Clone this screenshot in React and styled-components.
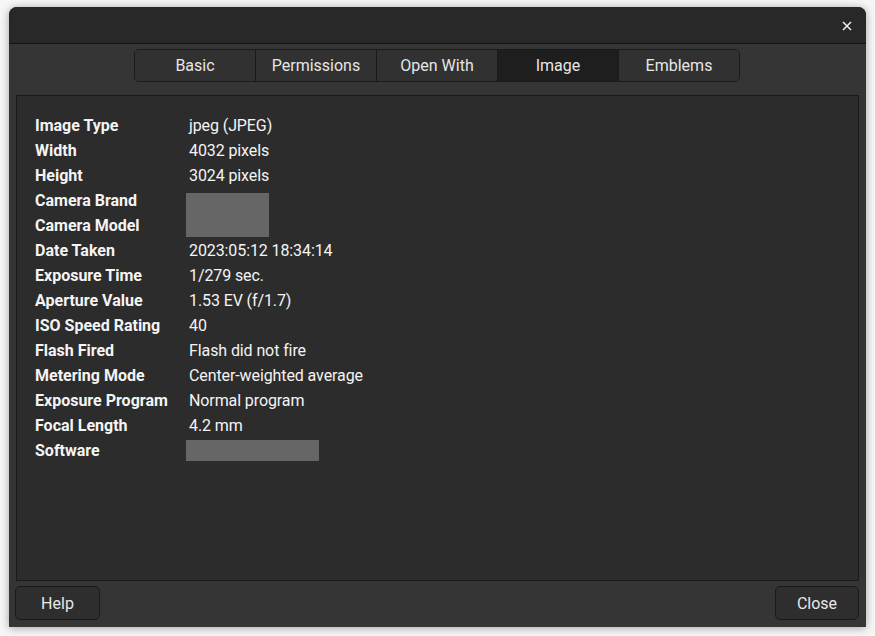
import React from "react";
import styled, { createGlobalStyle } from "styled-components";

const Global = createGlobalStyle`
  html, body { margin: 0; padding: 0; background: #f6f6f6; }
  body { font-family: Roboto, "Noto Sans", "Liberation Sans", sans-serif; }
  #root { width: 875px; height: 636px; }
`;

const Stage = styled.div`
  width: 875px;
  height: 636px;
  box-sizing: border-box;
  padding: 7px 9px 9px 9px;
`;

const Window = styled.div`
  width: 857px;
  height: 620px;
  display: flex;
  flex-direction: column;
  background: #353535;
  border-radius: 8px 8px 0 0;
  box-shadow: 0 1px 9px rgba(0, 0, 0, 0.35);
  overflow: hidden;
`;

const TitleBar = styled.div`
  height: 36px;
  flex: none;
  background: #282828;
  border-bottom: 1px solid #141414;
  display: flex;
  align-items: center;
  justify-content: flex-end;
  padding-right: 11px;
`;

const CloseX = styled.button`
  width: 16px;
  height: 16px;
  padding: 0;
  border: none;
  background: transparent;
  display: flex;
  align-items: center;
  justify-content: center;
  margin-top: 1px;
`;

const Body = styled.div`
  flex: 1;
  display: flex;
  flex-direction: column;
  padding: 5px 7px 7px 7px;
  min-height: 0;
`;

const TabRow = styled.div`
  display: flex;
  justify-content: center;
  flex: none;
  padding-right: 1px;
`;

const TabGroup = styled.div`
  display: flex;
  border: 1px solid #1a1a1a;
  border-radius: 5px;
  overflow: hidden;
`;

const Tab = styled.div`
  width: 120px;
  height: 31px;
  display: flex;
  align-items: center;
  justify-content: center;
  font-size: 16px;
  color: #e6e6e6;
  background: ${(p) => (p.$active ? "#1e1e1e" : "#313131")};
  & + & {
    border-left: 1px solid #1a1a1a;
  }
`;

const Frame = styled.div`
  margin-top: 13px;
  flex: 1;
  background: #2c2c2c;
  border: 1px solid #1a1a1a;
  padding: 17px 18px;
`;

const Grid = styled.div`
  display: grid;
  grid-template-columns: 154px 1fr;
  grid-auto-rows: 25px;
  font-size: 16px;
  line-height: 25px;
  color: #f4f4f4;
`;

const Label = styled.div`
  font-weight: 700;
  white-space: nowrap;
`;

const Value = styled.div`
  white-space: nowrap;
  letter-spacing: -0.1px;
`;

const Redacted = styled.div`
  background: #666666;
  width: ${(p) => p.$w}px;
  height: ${(p) => p.$h}px;
  margin-top: ${(p) => p.$top}px;
  margin-left: -3px;
  grid-row: span ${(p) => p.$span || 1};
`;

const Footer = styled.div`
  flex: none;
  display: flex;
  justify-content: space-between;
  margin-top: 5px;
  margin-left: -1px;
`;

const Button = styled.button`
  width: ${(p) => p.$w || 85}px;
  height: 34px;
  box-sizing: border-box;
  border: 1px solid #1a1a1a;
  border-radius: 5px;
  background: #2e2e2e;
  color: #e8e8e8;
  font-family: Roboto, "Noto Sans", sans-serif;
  font-size: 16px;
  padding: 0;
  padding-top: 1px;
`;

const rowsBefore = [
  ["Image Type", "jpeg (JPEG)"],
  ["Width", "4032 pixels"],
  ["Height", "3024 pixels"],
];

const rowsAfter = [
  ["Date Taken", "2023:05:12 18:34:14"],
  ["Exposure Time", "1/279 sec."],
  ["Aperture Value", "1.53 EV (f/1.7)"],
  ["ISO Speed Rating", "40"],
  ["Flash Fired", "Flash did not fire"],
  ["Metering Mode", "Center-weighted average"],
  ["Exposure Program", "Normal program"],
  ["Focal Length", "4.2 mm"],
];

const tabs = ["Basic", "Permissions", "Open With", "Image", "Emblems"];

export default function App() {
  return (
    <>
      <Global />
      <Stage>
        <Window>
          <TitleBar>
            <CloseX aria-label="close">
              <svg width="10" height="10" viewBox="0 0 10 10">
                <path d="M1 1 L9 9 M9 1 L1 9" stroke="#eeeeee" strokeWidth="1.5" />
              </svg>
            </CloseX>
          </TitleBar>
          <Body>
            <TabRow>
              <TabGroup>
                {tabs.map((t) => (
                  <Tab key={t} $active={t === "Image"}>
                    {t}
                  </Tab>
                ))}
              </TabGroup>
            </TabRow>
            <Frame>
              <Grid>
                {rowsBefore.map(([l, v]) => (
                  <React.Fragment key={l}>
                    <Label>{l}</Label>
                    <Value>{v}</Value>
                  </React.Fragment>
                ))}
                <Label>Camera Brand</Label>
                <Redacted $w={83} $h={44} $top={5} $span={2} />
                <Label>Camera Model</Label>
                {rowsAfter.map(([l, v]) => (
                  <React.Fragment key={l}>
                    <Label>{l}</Label>
                    <Value>{v}</Value>
                  </React.Fragment>
                ))}
                <Label>Software</Label>
                <Redacted $w={133} $h={21} $top={2} />
              </Grid>
            </Frame>
            <Footer>
              <Button>Help</Button>
              <Button $w={84}>Close</Button>
            </Footer>
          </Body>
        </Window>
      </Stage>
    </>
  );
}
